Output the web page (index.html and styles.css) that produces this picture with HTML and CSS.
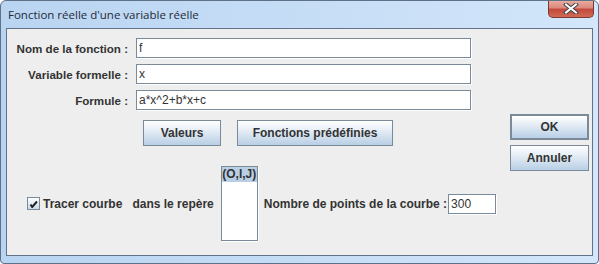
FILE: index.html
```html
<!DOCTYPE html>
<html lang="fr">
<head>
  <meta charset="UTF-8" />
  <title>Fonction réelle d'une variable réelle</title>
  <link rel="stylesheet" href="styles.css">
</head>
<body>
  <div class="window">
    <div class="titlebar">
      <span class="title">Fonction réelle d'une variable réelle</span>
      <div class="close-btn">
        <svg width="16" height="11" viewBox="0 0 16 11">
          <path d="M3 1.5 L13 9.5 M13 1.5 L3 9.5" stroke="#3b3f48" stroke-width="4" stroke-linecap="square"/>
          <path d="M3 1.5 L13 9.5 M13 1.5 L3 9.5" stroke="#ffffff" stroke-width="2" stroke-linecap="square"/>
        </svg>
      </div>
    </div>

    <div class="pane">
      <div class="main">
        <div class="form-grid">
          <label class="lbl" for="nom">Nom de la fonction :</label>
          <input class="field" type="text" id="nom" value="f">
          <label class="lbl" for="var">Variable formelle :</label>
          <input class="field" type="text" id="var" value="x">
          <label class="lbl" for="formule">Formule :</label>
          <input class="field" type="text" id="formule" value="a*x^2+b*x+c">
        </div>

        <div class="btn-row">
          <button class="btn btn-val">Valeurs</button>
          <button class="btn btn-fct">Fonctions prédéfinies</button>
        </div>

        <div class="bottom-row">
          <span class="check"><svg width="9" height="8" viewBox="0 0 9 8"><path d="M1.5 4.5 L3.2 7 L8 1.5" stroke="#222" stroke-width="2" fill="none"/></svg></span>
          <span class="lbl trace">Tracer courbe</span>
          <span class="lbl">dans le repère</span>
          <div class="repere">
            <div class="repere-item">(O,I,J)</div>
          </div>
          <span class="lbl">Nombre de points de la courbe :</span>
          <input class="field small" type="text" value="300">
        </div>
      </div>

      <div class="side">
        <button class="btn btn-ok">OK</button>
        <button class="btn">Annuler</button>
      </div>
    </div>
  </div>
</body>
</html>
```

FILE: styles.css
```css
body {
  margin: 0;
  background: #fff;
}
.window {
  width: 599px;
  height: 264px;
  box-sizing: border-box;
  border: 1px solid #5f7187;
  border-radius: 6px 6px 4px 4px;
  background: linear-gradient(90deg, #b9d4f1 0%, #c6ddf6 50%, #d3e6fa 100%);
  overflow: hidden;
  display: flex;
  flex-direction: column;
}
.titlebar {
  height: 27px;
  display: flex;
  align-items: flex-start;
  justify-content: space-between;
  padding-left: 7px;
}
.title {
  font-family: "Open Sans", "Noto Sans", sans-serif;
  font-size: 11.5px;
  color: #1e2a3a;
  margin-top: 6px;
}
.close-btn {
  width: 44px;
  height: 17px;
  margin-right: 4px;
  margin-top: -1px;
  border: 1px solid #7d3a33;
  border-top: none;
  border-radius: 0 0 5px 5px;
  background: linear-gradient(180deg, #eab0a6 0%, #dc8a7e 45%, #c4493c 55%, #cf6a55 100%);
  display: flex;
  align-items: center;
  justify-content: center;
}
.pane {
  margin: 0 5px;
  height: 228px;
  box-sizing: border-box;
  border: 1px solid #627387;
  background: #eeeeee;
  display: flex;
  font-family: "Liberation Sans", Arial, sans-serif;
  font-size: 12px;
  color: #333333;
}
.main {
  width: 500px;
  padding-top: 9px;
}
.form-grid {
  display: grid;
  grid-template-columns: 121px 335px;
  column-gap: 8px;
  row-gap: 6px;
  align-items: center;
}
.lbl {
  font-weight: bold;
  white-space: nowrap;
}
.form-grid .lbl {
  text-align: right;
  font-size: 11.6px;
}
.field {
  height: 20px;
  box-sizing: border-box;
  border: 1px solid #7a8a99;
  box-shadow: 1px 1px 0 #ffffff;
  background: #fff;
  margin: 0;
  padding: 0 2px;
  font-family: "Liberation Sans", Arial, sans-serif;
  font-size: 12px;
  color: #333;
}
.btn-row {
  display: flex;
  gap: 16px;
  margin-top: 10px;
  margin-left: 136px;
}
.btn {
  height: 26px;
  box-sizing: border-box;
  border: 1px solid #7a8a99;
  background: linear-gradient(180deg, #ffffff 0%, #e8eff7 35%, #d6e3f0 60%, #b8cfe5 100%);
  font-family: "Liberation Sans", Arial, sans-serif;
  font-size: 12px;
  font-weight: bold;
  color: #333333;
  padding: 0;
  cursor: pointer;
}
.btn-val {
  width: 78px;
}
.btn-fct {
  width: 156px;
}
.bottom-row {
  display: flex;
  align-items: center;
  margin-top: 20px;
  margin-left: 20px;
}
.check {
  width: 13px;
  height: 13px;
  box-sizing: border-box;
  border: 1px solid #7a8a99;
  background: linear-gradient(180deg, #ffffff, #c8d9ea);
  display: flex;
  align-items: center;
  justify-content: center;
  margin-right: 3px;
}
.trace {
  margin-right: 10px;
}
.repere {
  width: 37px;
  height: 75px;
  box-sizing: border-box;
  border: 1px solid #7a8a99;
  box-shadow: 1px 1px 0 #ffffff;
  background: #fff;
  margin: 0 6px 0 7px;
}
.repere-item {
  background: #b8cfe5;
  height: 15px;
  line-height: 15px;
  font-weight: bold;
  text-align: center;
  font-size: 12px;
  white-space: nowrap;
  overflow: hidden;
}
.small {
  width: 48px;
  margin-left: 1px;
}
.side {
  display: flex;
  flex-direction: column;
  gap: 5px;
  padding-top: 85px;
  margin-left: 3px;
}
.side .btn {
  width: 79px;
}
.btn-ok {
  border: 2px solid #7a8a99;
}
```
